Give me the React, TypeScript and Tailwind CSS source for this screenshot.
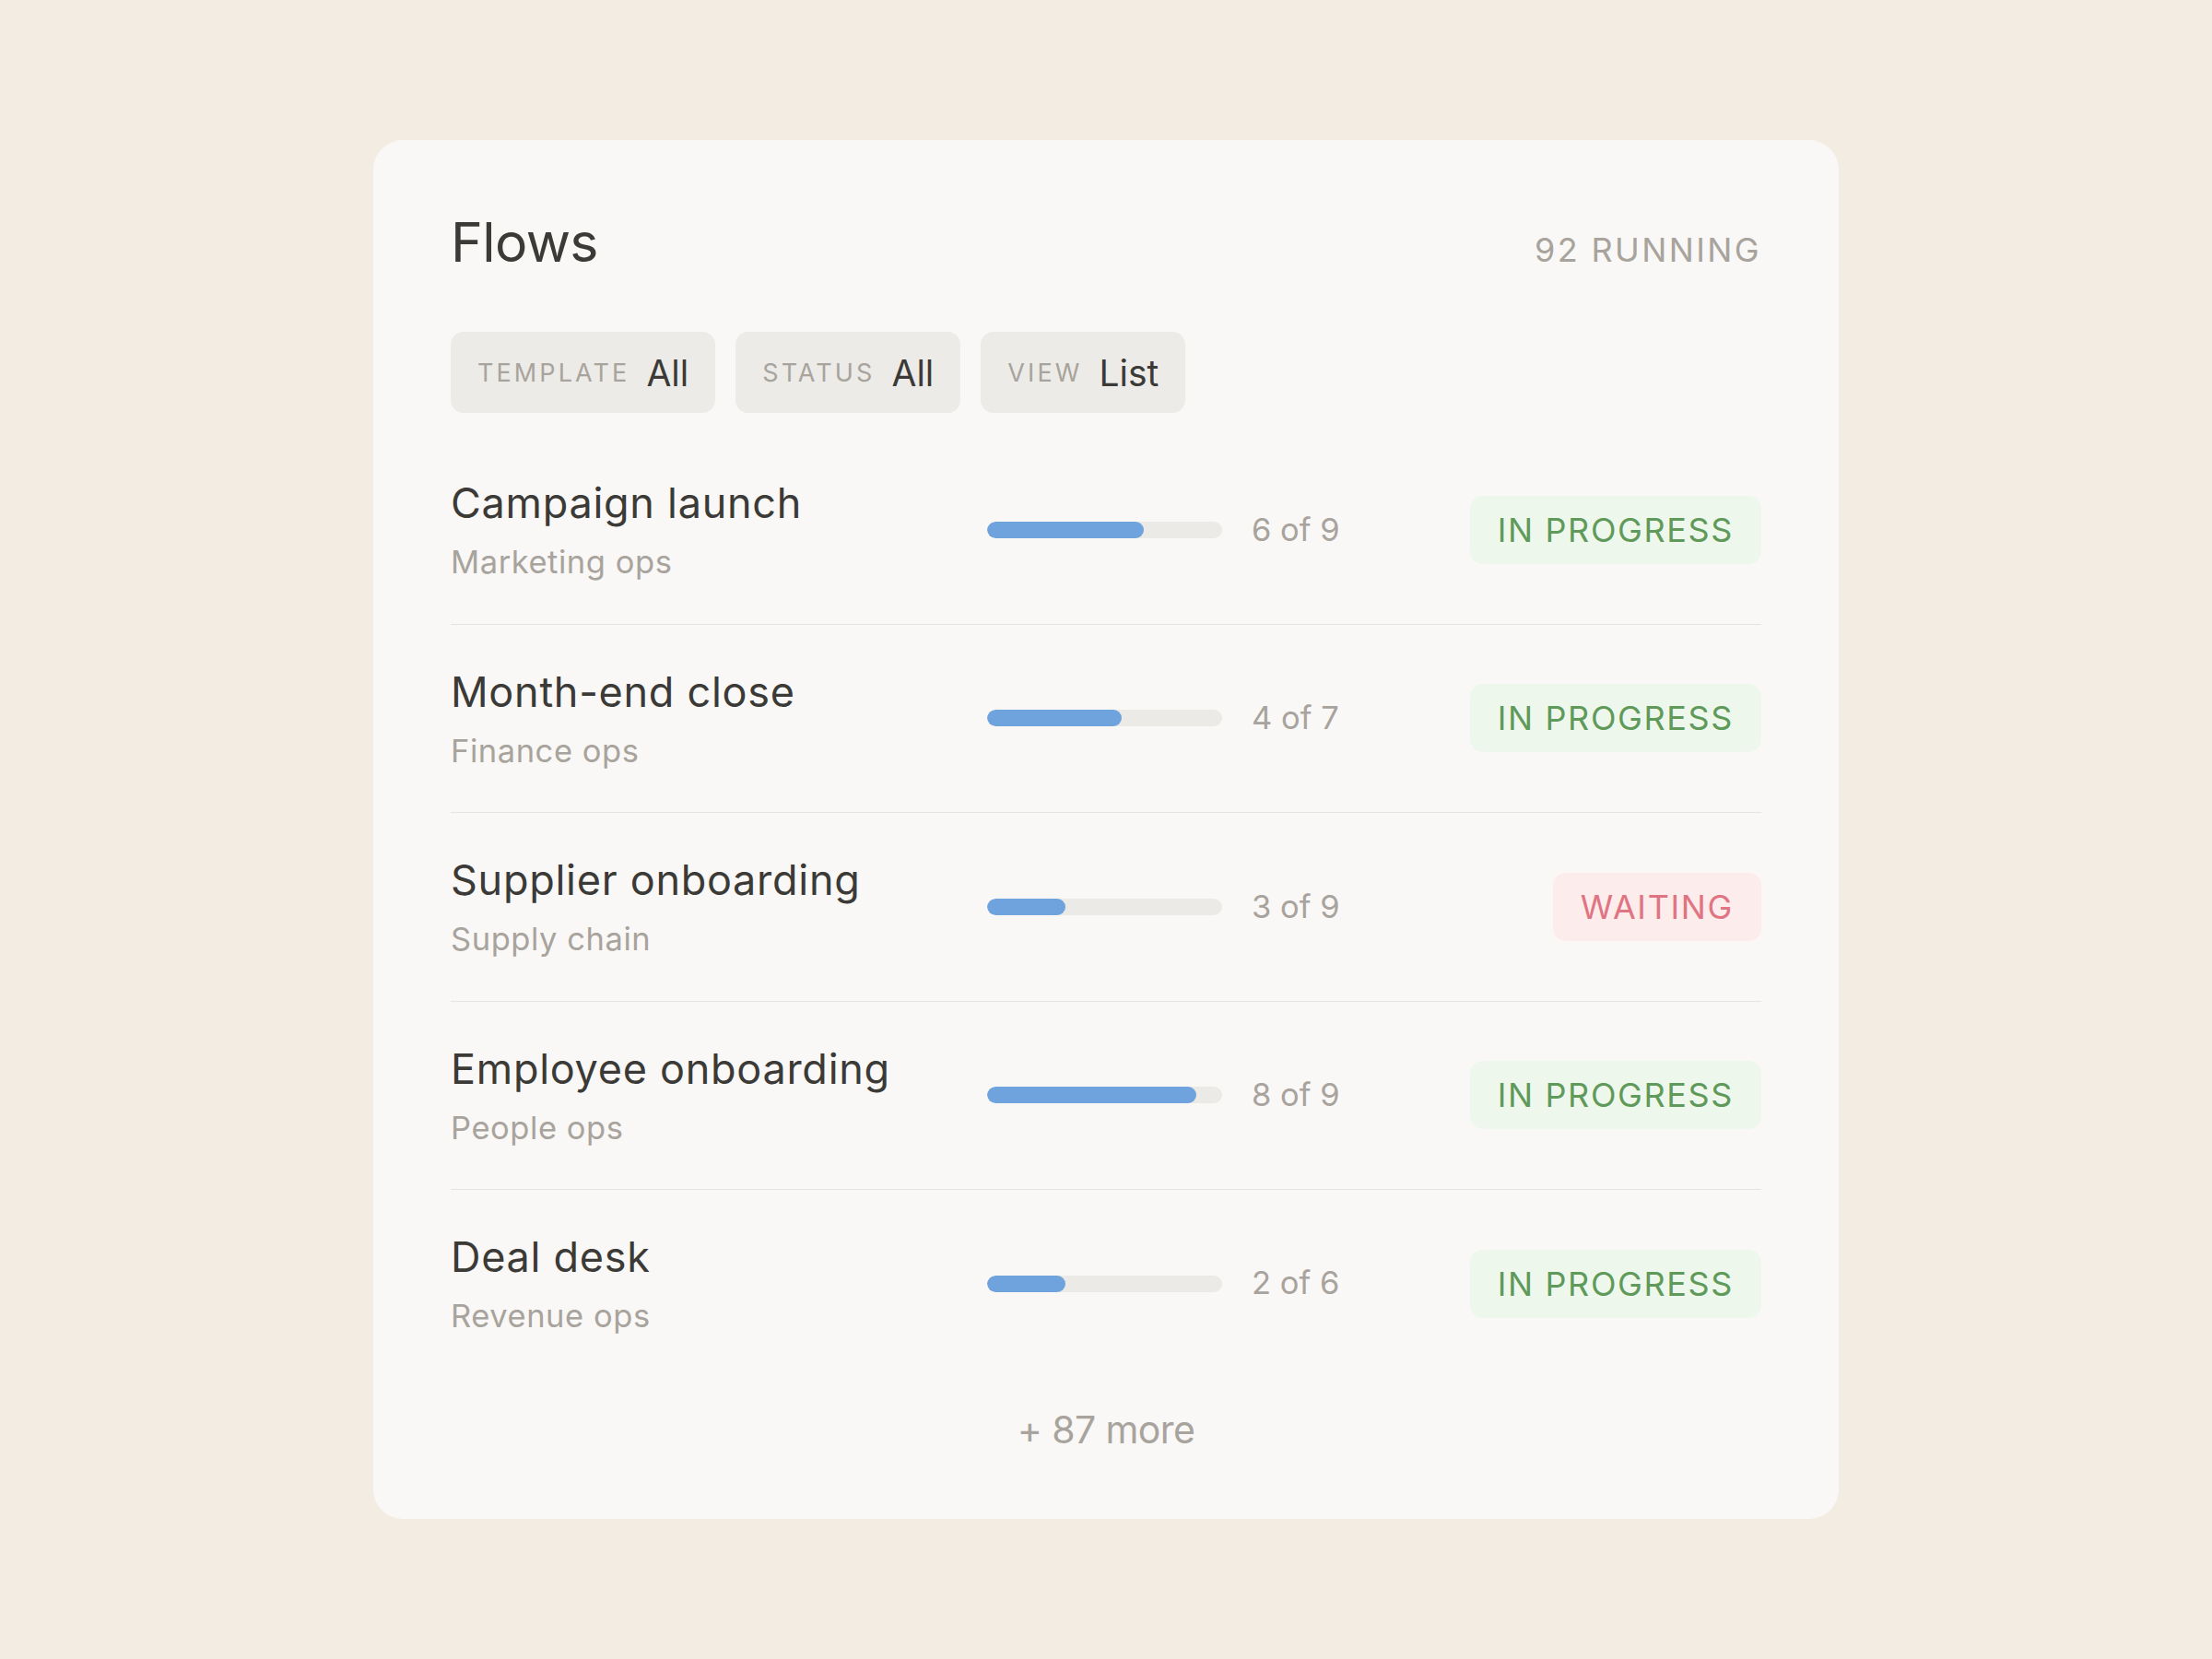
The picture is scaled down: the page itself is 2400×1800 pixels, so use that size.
import React from "react";

type Flow = {
  title: string;
  team: string;
  done: number;
  total: number;
  status: "progress" | "waiting";
};

const flows: Flow[] = [
  { title: "Campaign launch", team: "Marketing ops", done: 6, total: 9, status: "progress" },
  { title: "Month-end close", team: "Finance ops", done: 4, total: 7, status: "progress" },
  { title: "Supplier onboarding", team: "Supply chain", done: 3, total: 9, status: "waiting" },
  { title: "Employee onboarding", team: "People ops", done: 8, total: 9, status: "progress" },
  { title: "Deal desk", team: "Revenue ops", done: 2, total: 6, status: "progress" },
];

function Chip({ label, value }: { label: string; value: string }) {
  return (
    <div className="flex h-[88px] items-center gap-[18px] rounded-[14px] bg-[#ecebe7] px-[29px]">
      <span className="text-[27px] leading-none tracking-[0.115em] text-[#a8a39c]">{label}</span>
      <span className="text-[39px] leading-none text-[#3b3a37]">{value}</span>
    </div>
  );
}

function Badge({ status }: { status: Flow["status"] }) {
  if (status === "waiting") {
    return (
      <div className="flex h-[74px] items-center rounded-[14px] bg-[#fdecec] px-[30px] text-[36px] leading-none tracking-[0.045em] text-[#e07482]">
        WAITING
      </div>
    );
  }
  return (
    <div className="flex h-[74px] items-center rounded-[14px] bg-[#eef7ec] px-[30px] text-[36px] leading-none tracking-[0.045em] text-[#5f9a5a]">
      IN PROGRESS
    </div>
  );
}

function Row({ flow, last }: { flow: Flow; last: boolean }) {
  const pct = (flow.done / flow.total) * 100;
  return (
    <div
      className={
        "flex items-center py-[46px] " + (last ? "" : "border-b-[1.5px] border-[#e6e4e0]")
      }
    >
      <div className="flex w-[581px] shrink-0 flex-col">
        <span className="text-[45px] leading-[1.2] tracking-[0.016em] text-[#3b3a37]">{flow.title}</span>
        <span className="mt-[16px] text-[34.5px] leading-[1.2] tracking-[0.016em] text-[#a8a39c]">
          {flow.team}
        </span>
      </div>
      <div className="ml-[1px] h-[18px] w-[255px] shrink-0 overflow-hidden rounded-full bg-[#ebeae6]">
        <div className="h-full rounded-full bg-[#6fa3dd]" style={{ width: `${pct}%` }} />
      </div>
      <span className="ml-[32px] text-[34.5px] leading-none text-[#a8a39c]">
        {flow.done} of {flow.total}
      </span>
      <div className="flex flex-1 justify-end">
        <Badge status={flow.status} />
      </div>
    </div>
  );
}

export default function App() {
  return (
    <div className="flex h-[1800px] w-full items-center justify-center bg-[#f3ece2] font-['Inter',sans-serif]">
      <div className="flex w-[1590px] flex-col rounded-[32px] bg-[#f9f8f6] px-[84px] pb-[72px] pt-[76px]">
        <div className="flex items-baseline justify-between">
          <h1 className="text-[59px] font-normal leading-[1.2] tracking-[-0.01em] text-[#3b3a37]">Flows</h1>
          <span className="text-[36px] tracking-[0.066em] text-[#a8a39c]">92 RUNNING</span>
        </div>
        <div className="mt-[62px] flex gap-[22px]">
          <Chip label="TEMPLATE" value="All" />
          <Chip label="STATUS" value="All" />
          <Chip label="VIEW" value="List" />
        </div>
        <div className="mt-[25px] flex flex-col">
          {flows.map((f, i) => (
            <Row key={f.title} flow={f} last={i === flows.length - 1} />
          ))}
        </div>
        <div className="mt-[33px] text-center text-[41px] leading-[1.2] tracking-[-0.015em] text-[#a8a39c]">
          + 87 more
        </div>
      </div>
    </div>
  );
}
